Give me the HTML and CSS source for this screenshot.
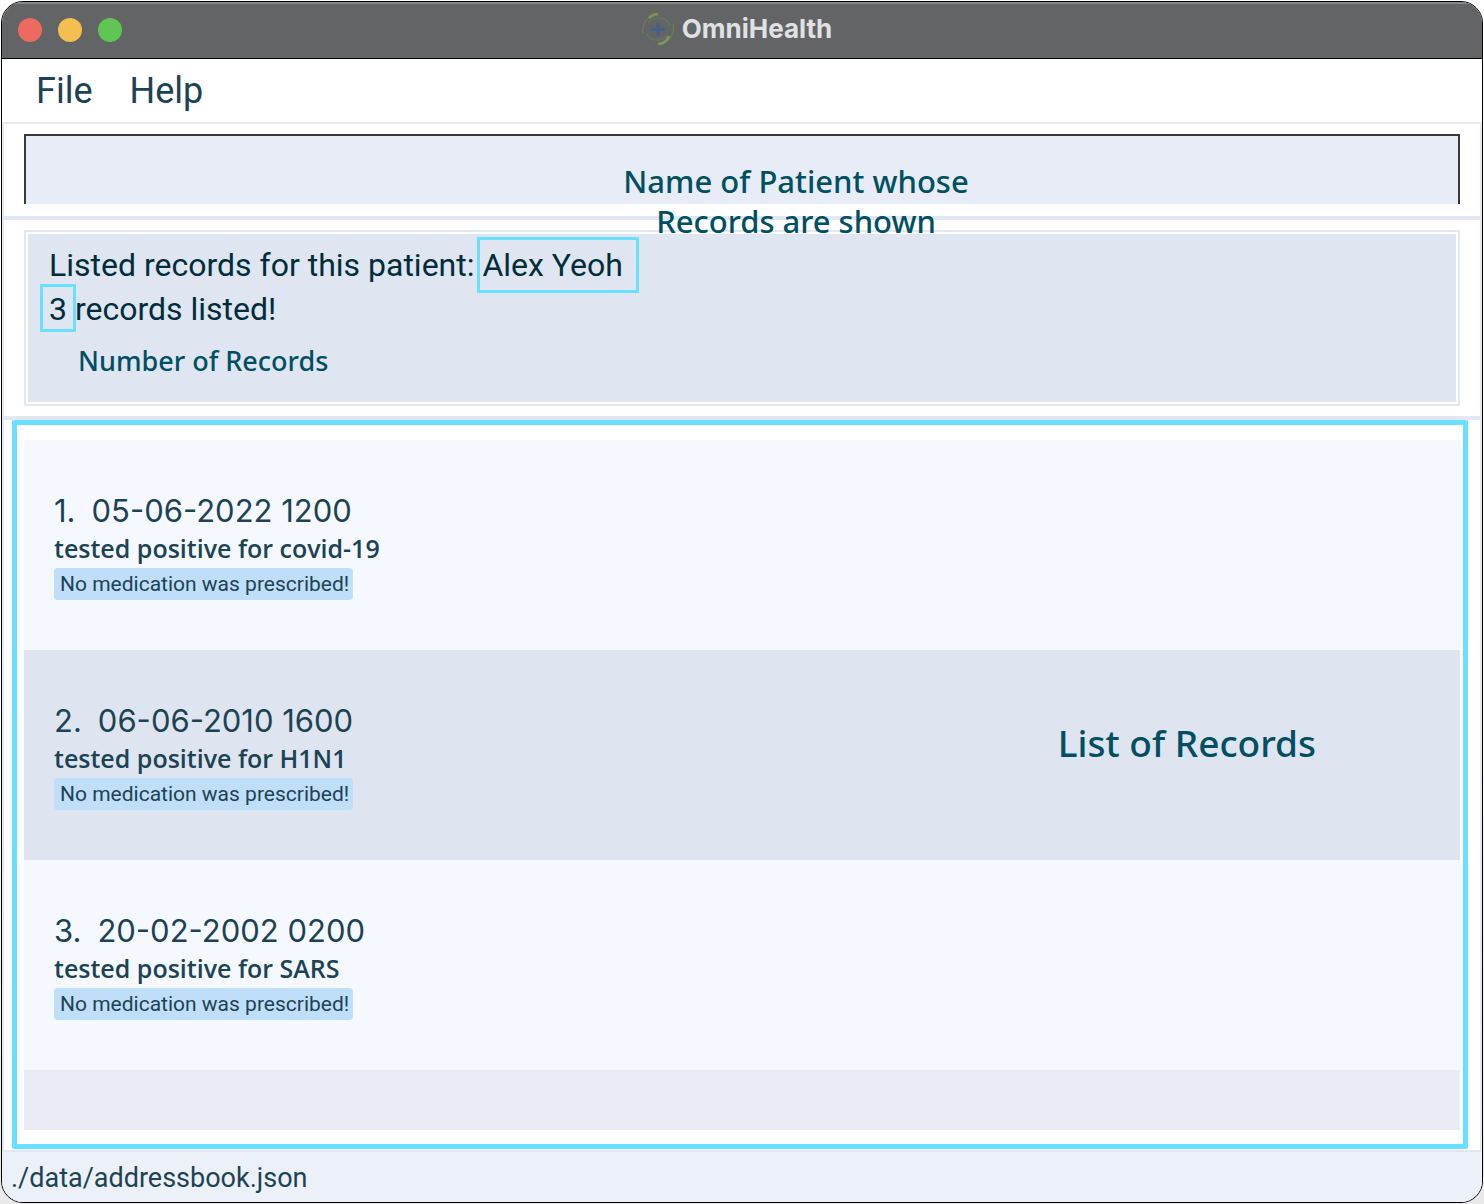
FILE: index.html
```html
<!DOCTYPE html>
<html lang="en">
<head>
<meta charset="utf-8">
<title>OmniHealth</title>
<meta name="viewport" content="width=device-width, initial-scale=1">
<link rel="stylesheet" href="styles.css">
</head>
<body>
<div class="window">
  <header class="titlebar">
    <div class="lights">
      <button class="light light-close" type="button" aria-label="Close"></button>
      <button class="light light-minimize" type="button" aria-label="Minimize"></button>
      <button class="light light-zoom" type="button" aria-label="Zoom"></button>
    </div>
    <h1 class="title">
      <svg class="logo" viewBox="0 0 32 32" width="32" height="32" fill="none" aria-hidden="true">
        <path d="M1 21C-1 10 6 2 16 1" stroke="#6f8058" stroke-width="1"/>
        <path d="M7 5C10 2 13 1 16 1" stroke="#7f8f58" stroke-width="3"/>
        <path d="M6 10C10 5 18 3 24 7C26 9 27 10 28 12" stroke="#5f7a5a" stroke-width="1.500"/>
        <path d="M31 11C33 22 27 30 17 31" stroke="#6f8058" stroke-width="1"/>
        <path d="M16 31C21 31 25 28 27 23" stroke="#83925a" stroke-width="3"/>
        <path d="M26 22C22 27 14 29 8 25C6 23 5 22 4 20" stroke="#5f7a5a" stroke-width="1.500"/>
        <path d="M16 10V23M9 16.500H23" stroke="#42618a" stroke-width="3"/>
      </svg>
      <span>OmniHealth</span>
    </h1>
  </header>
  <nav class="menubar">
    <button class="menu" type="button">File</button>
    <button class="menu" type="button">Help</button>
  </nav>
  <main class="content">
    <section class="command">
      <input class="command-input" type="text" aria-label="Command">
    </section>
    <section class="result">
      <div class="result-box">
        <p class="result-line">Listed records for this patient: <span class="marked marked-name">Alex Yeoh</span></p>
        <p class="result-line"><span class="marked marked-count">3</span> records listed!</p>
        <span class="note note-count">Number of Records</span>
      </div>
      <span class="note note-name">Name of Patient whose Records are shown</span>
    </section>
    <section class="records">
      <ol class="record-list">
        <li class="record">
          <h2 class="record-date"><span>1.</span><span>05-06-2022 1200</span></h2>
          <p class="record-text">tested positive for covid-19</p>
          <span class="tag">No medication was prescribed!</span>
        </li>
        <li class="record">
          <h2 class="record-date"><span>2.</span><span>06-06-2010 1600</span></h2>
          <p class="record-text">tested positive for H1N1</p>
          <span class="tag">No medication was prescribed!</span>
        </li>
        <li class="record">
          <h2 class="record-date"><span>3.</span><span>20-02-2002 0200</span></h2>
          <p class="record-text">tested positive for SARS</p>
          <span class="tag">No medication was prescribed!</span>
        </li>
      </ol>
      <span class="note note-list">List of Records</span>
    </section>
  </main>
  <footer class="statusbar">./data/addressbook.json</footer>
</div>
</body>
</html>
```
FILE: styles.css
```css
* { box-sizing: border-box; }

body {
  margin: 0;
  min-height: 100vh;
  padding: 1px;
  display: flex;
  background: linear-gradient(#fff 50%, #e9e9e9);
  font-family: Roboto, "Liberation Sans", sans-serif;
  color: #1c4353;
}

h1, h2, p, ol { margin: 0; padding: 0; font-weight: 400; }
button { padding: 0; border: 0; background: none; font: inherit; color: inherit; }

.window {
  flex: 1;
  display: flex;
  flex-direction: column;
  border: 1px solid #000;
  border-radius: 22px;
  background: #fff;
  overflow: hidden;
}

.titlebar {
  display: grid;
  grid-template-columns: 1fr auto 1fr;
  align-items: center;
  height: 57px;
  padding: 0 16px;
  border-bottom: 1px solid #000;
  background: #626466;
  box-shadow: inset 0 2px #858987;
}
.lights { display: flex; gap: 16px; }
.light { width: 24px; height: 24px; border-radius: 50%; }
.light-close { background: #ed6a5e; }
.light-minimize { background: #f5bf4f; }
.light-zoom { background: #61c554; }
.title {
  display: flex;
  align-items: center;
  gap: 8px;
  padding: 0 10px 2px 0;
  font: 700 26px/30px Inter, sans-serif;
  color: #e0e1e3;
}

.menubar {
  display: flex;
  gap: 37px;
  height: 63px;
  padding: 0 34px;
  font-size: 36px;
  line-height: 64px;
}

.content {
  flex: 1;
  display: flex;
  flex-direction: column;
  border: 2px solid #e3e8f3;
  border-bottom: 0;
}
.command { padding: 10px 20px 12px; border-bottom: 4px solid #e2e8f2; }
.command-input {
  display: block;
  width: 100%;
  height: 70px;
  padding: 0 24px;
  border: 2px solid #383838;
  border-bottom: 0;
  border-radius: 0;
  background: #e8ecf6;
  font: 400 32px Roboto, sans-serif;
  color: #1c4353;
}

.result { position: relative; padding: 10px 20px; border-bottom: 4px solid #e2e8f2; }
.result-box {
  position: relative;
  min-height: 176px;
  padding: 11px 19px;
  border: 2px solid #e2e8f2;
  box-shadow: inset 0 0 0 2px #fff;
  background: #dfe5f1;
  color: #002d3c;
}
.result-line { padding-left: 4px; font-size: 32px; line-height: 44px; }
.marked { position: relative; }
.marked::after { content: ""; position: absolute; border: 3px solid #69e0ff; }
.marked-name::after { inset: -9px -16px -9px -5px; }
.marked-count::after { inset: -6px -9px -4px; }

.note {
  position: absolute;
  font-family: "Noto Sans", "Open Sans", sans-serif;
  font-weight: 500;
  color: #004f63;
  text-align: center;
}
.note-name { left: 592px; top: -59px; width: 400px; font-size: 31px; line-height: 40px; }
.note-count { left: 52px; top: 111px; font-size: 27px; line-height: 36px; }
.note-list { right: 147px; top: 292px; font-size: 37px; line-height: 52px; }

.records {
  position: relative;
  flex: 1;
  display: flex;
  margin: 0 12px 1px 8px;
  padding: 15px 3px 14px 7px;
  border: 5px solid #69e0ff;
  border-radius: 2px;
}
.record-list { flex: 1; list-style: none; padding-bottom: 60px; background: #e8ebf4; }
.record { height: 210px; padding: 51px 30px; background: #f5f8ff; }
.record:nth-child(even) { background: #dfe5f0; }
.record-date { display: flex; gap: 16px; font: 400 31px/40px Inter, sans-serif; }
.record-text { font: 600 25px/34px "Open Sans", sans-serif; }
.tag {
  display: block;
  width: fit-content;
  margin-top: 3px;
  padding: 1px 4px 0 6px;
  border-radius: 4px;
  background: #bfdefa;
  font-size: 21px;
  line-height: 31px;
}

.statusbar {
  height: 52px;
  padding: 0 9px;
  border-top: 2px solid #e2e8f2;
  background: #ecf0f9;
  font-size: 27px;
  line-height: 52px;
}
```
